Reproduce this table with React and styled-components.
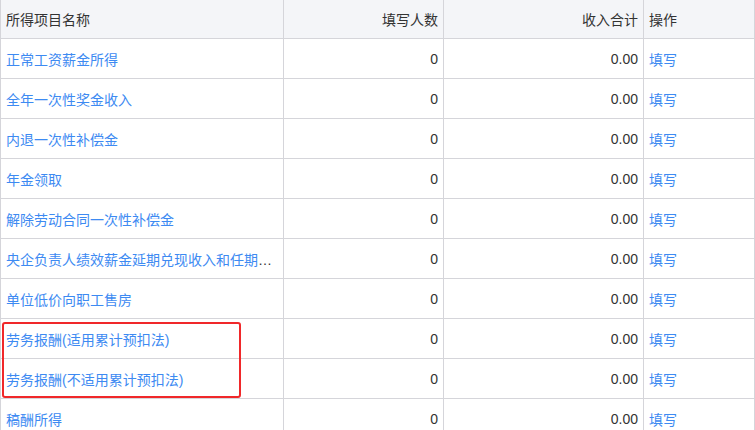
import React from 'react'
import styled, { createGlobalStyle } from 'styled-components'

const GlobalStyle = createGlobalStyle`
  body {
    margin: 0;
    background: #fff;
    font-family: "Liberation Sans", "Noto Sans CJK SC", sans-serif;
  }
`

const rows = [
  '正常工资薪金所得',
  '全年一次性奖金收入',
  '内退一次性补偿金',
  '年金领取',
  '解除劳动合同一次性补偿金',
  '央企负责人绩效薪金延期兑现收入和任期奖励',
  '单位低价向职工售房',
  '劳务报酬(适用累计预扣法)',
  '劳务报酬(不适用累计预扣法)',
  '稿酬所得',
]

const Wrapper = styled.div`
  position: relative;
  width: 755px;
  height: 430px;
  overflow: hidden;
`

const Table = styled.table`
  width: 755px;
  border-collapse: collapse;
  table-layout: fixed;
  font-size: 14px;
  color: #333;
`

const Th = styled.th`
  height: 38px;
  padding: 0 5px;
  background: #f4f5f8;
  border: 1px solid #d5d5da;
  border-top: none;
  font-weight: normal;
  text-align: ${(p) => p.align || 'left'};
  color: #333;
`

const Td = styled.td`
  height: 39px;
  padding: 0 5px;
  border: 1px solid #d5d5da;
  text-align: ${(p) => p.align || 'left'};
  white-space: nowrap;
  overflow: hidden;
  text-overflow: ellipsis;
`

const Link = styled.a`
  color: #3d8af2;
  text-decoration: none;
  cursor: pointer;
`

// red annotation box drawn over the two labour-remuneration rows
const Highlight = styled.div`
  position: absolute;
  left: 2px;
  top: 322px;
  width: 239px;
  height: 76px;
  box-sizing: border-box;
  border: 2px solid #f0282a;
  border-radius: 3px;
  pointer-events: none;
`

export default function App() {
  return (
    <Wrapper>
      <GlobalStyle />
      <Table>
        <colgroup>
          <col style={{ width: 283 }} />
          <col style={{ width: 160 }} />
          <col style={{ width: 200 }} />
          <col />
        </colgroup>
        <thead>
          <tr>
            <Th>所得项目名称</Th>
            <Th align="right">填写人数</Th>
            <Th align="right">收入合计</Th>
            <Th>操作</Th>
          </tr>
        </thead>
        <tbody>
          {rows.map((name) => (
            <tr key={name}>
              <Td><Link>{name}</Link></Td>
              <Td align="right">0</Td>
              <Td align="right">0.00</Td>
              <Td><Link>填写</Link></Td>
            </tr>
          ))}
        </tbody>
      </Table>
      <Highlight />
    </Wrapper>
  )
}
